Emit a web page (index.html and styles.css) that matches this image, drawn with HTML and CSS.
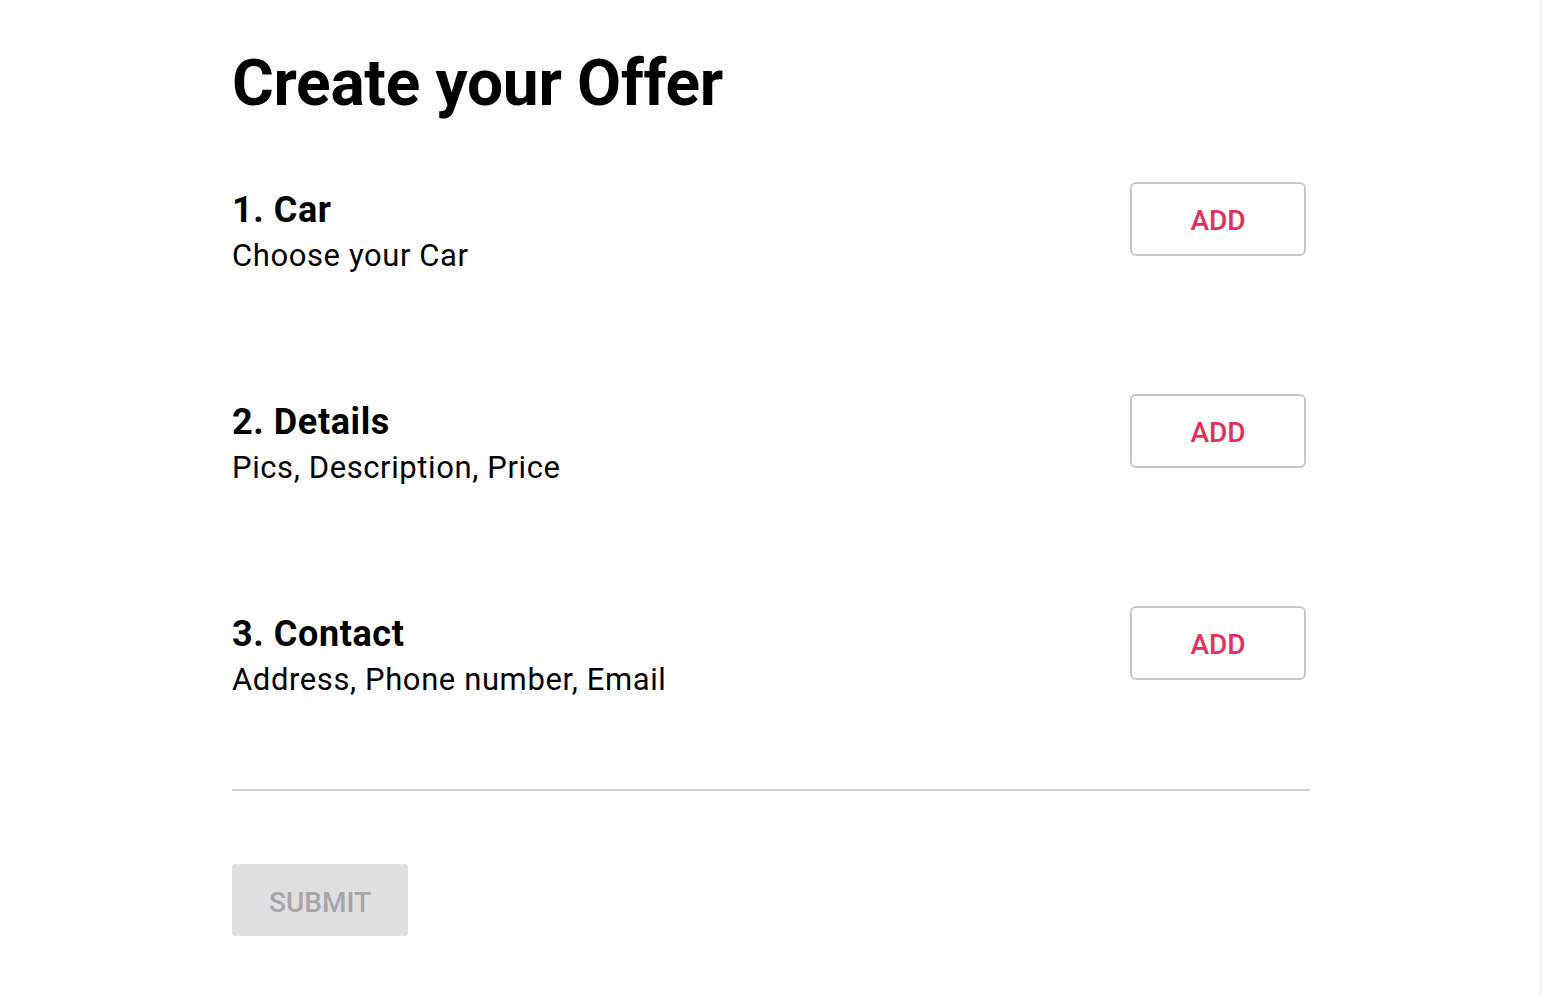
FILE: index.html
```html
<!DOCTYPE html>
<html lang="en">
<head>
<meta charset="utf-8">
<title>Create your Offer</title>
<link rel="stylesheet" href="styles.css">
</head>
<body>
<main class="page">
  <h1 class="title">Create your Offer</h1>
  <section class="steps">
    <div class="step">
      <div class="step-text">
        <h2 class="step-title">1. Car</h2>
        <p class="step-desc">Choose your Car</p>
      </div>
      <button class="btn-add" type="button">ADD</button>
    </div>
    <div class="step">
      <div class="step-text">
        <h2 class="step-title">2. Details</h2>
        <p class="step-desc">Pics, Description, Price</p>
      </div>
      <button class="btn-add" type="button">ADD</button>
    </div>
    <div class="step">
      <div class="step-text">
        <h2 class="step-title">3. Contact</h2>
        <p class="step-desc">Address, Phone number, Email</p>
      </div>
      <button class="btn-add" type="button">ADD</button>
    </div>
  </section>
  <hr class="divider">
  <button class="btn-submit" type="button" disabled>SUBMIT</button>
</main>
</body>
</html>
```

FILE: styles.css
```css
html, body {
  margin: 0;
  padding: 0;
  background: #ffffff;
}
body {
  min-height: 100vh;
  box-sizing: border-box;
  border-right: 2px solid #f1f1f1;
  font-family: Roboto, "Liberation Sans", sans-serif;
  color: #000;
}
.page {
  width: 1078px;
  margin-left: 232px;
  padding-top: 46px;
}
.title {
  margin: 0;
  font-size: 64px;
  line-height: 76px;
  font-weight: 700;
  letter-spacing: -0.3px;
}
.steps {
  display: flex;
  flex-direction: column;
  gap: 120px;
  margin-top: 60px;
}
.step {
  display: flex;
  justify-content: space-between;
  align-items: flex-start;
  padding-right: 4px;
}
.step-text {
  padding-top: 4px;
}
.step-title {
  margin: 0 0 4px;
  font-size: 36px;
  line-height: 48px;
  font-weight: 700;
  letter-spacing: 0.6px;
}
.step-desc {
  margin: 0;
  font-size: 31px;
  line-height: 36px;
  font-weight: 400;
  letter-spacing: 0.6px;
}
.btn-add {
  width: 176px;
  height: 74px;
  box-sizing: border-box;
  border: 2px solid #c8c8c8;
  border-radius: 6px;
  background: #fff;
  color: #e2305c;
  font-family: Roboto, "Liberation Sans", sans-serif;
  font-size: 28px;
  font-weight: 500;
  padding: 3px 0 0;
}
.divider {
  margin: 91px 0 0;
  border: 0;
  height: 2px;
  background: #d0d0d0;
}
.btn-submit {
  margin-top: 73px;
  width: 176px;
  height: 72px;
  border: 0;
  border-radius: 4px;
  background: #e0e0e0;
  color: #a6a6a6;
  font-family: Roboto, "Liberation Sans", sans-serif;
  font-size: 28px;
  font-weight: 500;
  padding: 5px 0 0;
}
```
